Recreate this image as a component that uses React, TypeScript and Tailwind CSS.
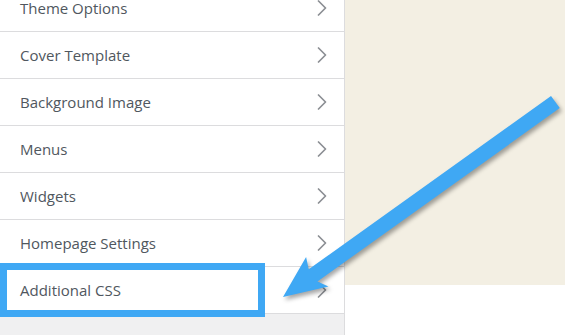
import { ChevronRight } from "lucide-react";

const items = [
  "Theme Options",
  "Cover Template",
  "Background Image",
  "Menus",
  "Widgets",
  "Homepage Settings",
  "Additional CSS",
];

function Row({ label }: { label: string }) {
  return (
    <div className="h-[47px] shrink-0 flex items-center justify-between bg-white border-b border-[#dcdcde] pl-5 pr-[8px]">
      <span className="text-[15px] text-[#50575e]">{label}</span>
      <ChevronRight className="w-[28px] h-[28px] text-[#8c8f94]" strokeWidth={1.5} />
    </div>
  );
}

export default function App() {
  return (
    <div
      className="relative w-[565px] h-[335px] overflow-hidden flex bg-white"
      style={{ fontFamily: '"Open Sans", "Noto Sans", sans-serif' }}
    >
      {/* Customizer panel */}
      <div className="w-[345px] shrink-0 h-full flex flex-col bg-[#f0f0f1] border-r border-[#dcdcde]">
        <div className="-mt-[15px] flex flex-col">
          {items.map((label) => (
            <Row key={label} label={label} />
          ))}
        </div>
      </div>

      {/* Preview */}
      <div className="flex-1 flex flex-col">
        <div className="h-[285px] bg-[#f3efe3]" />
        <div className="flex-1 bg-white" />
      </div>

      {/* Highlight box */}
      <div className="absolute left-0 top-[263px] w-[265px] h-[54px] border-[7px] border-[#3fa8f4]" />

      {/* Arrow */}
      <svg
        className="absolute inset-0 pointer-events-none"
        width="565"
        height="335"
        viewBox="0 0 565 335"
        style={{ filter: "drop-shadow(2px 3px 2px rgba(0,0,0,0.35))" }}
      >
        <g transform="translate(283 297) rotate(-35.6)">
          <polygon
            points="0,0 42,-19 37,-7.5 335,-7.5 335,7.5 37,7.5 43,18"
            fill="#3fa8f4"
          />
        </g>
      </svg>
    </div>
  );
}
